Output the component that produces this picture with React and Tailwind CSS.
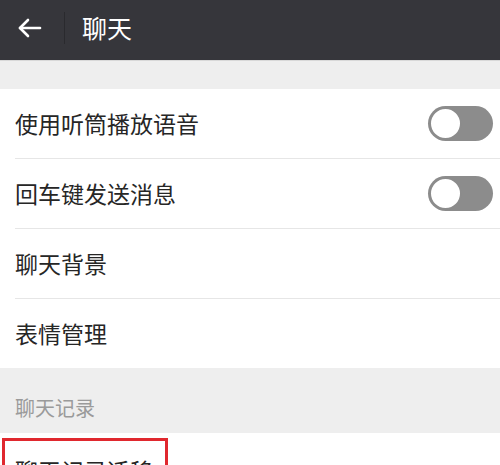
import React from 'react';

function Toggle() {
  return (
    <div className="relative h-[35px] w-[65px] rounded-full bg-[#8c8c8c]">
      <div className="absolute left-[1px] top-[1px] h-[33px] w-[33px] rounded-full border-2 border-[#8c8c8c] bg-white" />
    </div>
  );
}

function Row({ label, toggle }) {
  return (
    <div className="flex h-[69px] items-center justify-between pl-[15px] pr-[7px]">
      <span className="text-[23px] text-[#262626]">{label}</span>
      {toggle && <Toggle />}
    </div>
  );
}

export default function App() {
  const rows = [
    { label: '使用听筒播放语音', toggle: true },
    { label: '回车键发送消息', toggle: true },
    { label: '聊天背景' },
    { label: '表情管理' },
  ];

  return (
    <div
      className="h-[465px] w-[500px] overflow-hidden bg-[#eeeeee]"
      style={{ fontFamily: '"Noto Sans CJK SC", "Noto Sans", sans-serif' }}
    >
      {/* 顶部标题栏 */}
      <div className="flex h-[61px] items-center border-b border-[#d8d8d8] bg-[#36363b] pb-[5px]">
        <div className="flex w-[64px] justify-center pr-[4px]">
          <svg width="26" height="22" viewBox="0 0 26 22" fill="none" stroke="#fff" strokeWidth="2.6" strokeLinecap="round" strokeLinejoin="round">
            <path d="M23 11H3" />
            <path d="M11 3L3 11l8 8" />
          </svg>
        </div>
        <div className="h-[32px] w-px bg-[#2a2a2e]" />
        <span className="ml-[17px] text-[25px] text-white">聊天</span>
      </div>

      <div className="h-[28px]" />

      <div className="bg-white">
        {rows.map((r, i) => (
          <div key={i}>
            {i > 0 && <div className="ml-[15px] h-px bg-[#e6e6e6]" />}
            <Row label={r.label} toggle={r.toggle} />
          </div>
        ))}
      </div>

      {/* 分组标题 */}
      <div className="flex h-[65px] items-end pb-[10px] pl-[15px]">
        <span className="text-[20px] text-[#9a9a9a]">聊天记录</span>
      </div>

      <div className="h-[40px] bg-white pt-[5px] pl-[2px]">
        <div className="h-[60px] w-[166px] border-[3px] border-[#e0282e] pl-[10px] pt-[12px]">
          <span className="text-[23px] text-[#262626]">聊天记录迁移</span>
        </div>
      </div>
    </div>
  );
}
